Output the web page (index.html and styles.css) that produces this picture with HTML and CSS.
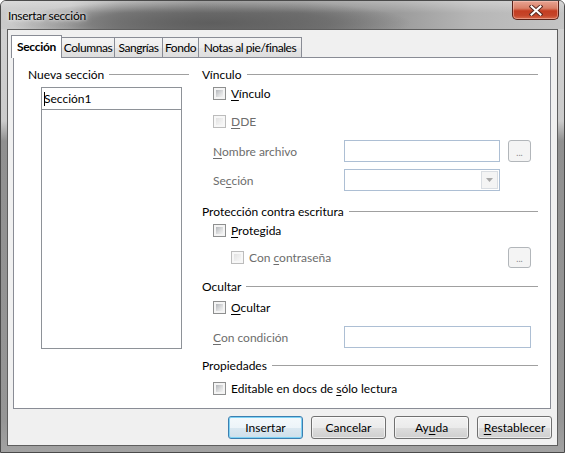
FILE: index.html
```html
<!DOCTYPE html>
<html lang="es">
<head>
<meta charset="utf-8">
<title>Insertar sección</title>
<link rel="stylesheet" href="styles.css">
</head>
<body>
<div class="window">
  <div class="titlebar">
    <span class="title">Insertar sección</span>
    <div class="close">
      <svg width="14" height="11" viewBox="0 0 14 11">
        <path d="M2.5 1.5 L11.5 9.5 M11.5 1.5 L2.5 9.5" stroke="#5a2a22" stroke-width="4" stroke-linecap="square"/>
        <path d="M2.5 1.5 L11.5 9.5 M11.5 1.5 L2.5 9.5" stroke="#ffffff" stroke-width="2" stroke-linecap="square"/>
      </svg>
    </div>
  </div>
  <div class="client">
    <div class="tabs">
      <div class="tab active t-sec">Sección</div>
      <div class="tab t-col">Columnas</div>
      <div class="tab t-san">Sangrías</div>
      <div class="tab t-fon">Fondo</div>
      <div class="tab t-not">Notas al pie/finales</div>
    </div>
    <div class="panel">
      <div class="col-left">
        <div class="group-head"><span>Nueva sección</span><i class="rule"></i></div>
        <div class="name-input"><span class="caret"></span>Sección1</div>
        <div class="name-list"></div>
      </div>
      <div class="col-right">
        <div class="group-head"><span>Vínculo</span><i class="rule"></i></div>
        <label class="check-row ind1 m3"><span class="cb"></span><span><u>V</u>ínculo</span></label>
        <label class="check-row ind1 m12 disabled"><span class="cb"></span><span><u>D</u>DE</span></label>
        <div class="field-row m11 disabled"><span class="flabel"><u>N</u>ombre archivo</span><span class="input w-short"></span><span class="dots">...</span></div>
        <div class="field-row m7 disabled"><span class="flabel">Se<u>c</u>ción</span><span class="input w-short combo"><span class="arrow"><svg width="7" height="4" viewBox="0 0 7 4"><path d="M0 0 H7 L3.5 4 Z" fill="#a8a8a8"/></svg></span></span></div>

        <div class="group-head m12"><span>Protección contra escritura</span><i class="rule"></i></div>
        <label class="check-row ind1 m3"><span class="cb"></span><span><u>P</u>rotegida</span></label>
        <div class="check-row ind2 m9 tall disabled"><span class="cb"></span><span class="grow">Con <u>c</u>ontraseña</span><span class="dots">...</span></div>

        <div class="group-head m10"><span>Ocultar</span><i class="rule"></i></div>
        <label class="check-row ind1 m5"><span class="cb"></span><span><u>O</u>cultar</span></label>
        <div class="field-row m11 disabled"><span class="flabel"><u>C</u>on condición</span><span class="input w-long"></span></div>

        <div class="group-head m9"><span>Propiedades</span><i class="rule"></i></div>
        <label class="check-row ind1 m7"><span class="cb"></span><span>Editable en docs de <u>s</u>ólo lectura</span></label>
      </div>
    </div>
    <div class="buttons">
      <div class="btn default">Insertar</div>
      <div class="btn">Cancelar</div>
      <div class="btn">Ay<u>u</u>da</div>
      <div class="btn"><u>R</u>establecer</div>
    </div>
  </div>
</div>
</body>
</html>
```

FILE: styles.css
```css
* { box-sizing: border-box; }

html, body {
  margin: 0;
  padding: 0;
  background: #ffffff;
}

body {
  font-family: "Lato", "Noto Sans", sans-serif;
  font-size: 12px;
  color: #000;
}

u { text-decoration: underline; text-underline-offset: 2px; }

.window {
  width: 565px;
  height: 453px;
  border: 1px solid #4a4a4a;
  border-radius: 6px 6px 0 0;
  padding: 0 6px 6px;
  display: flex;
  flex-direction: column;
  background: linear-gradient(to bottom, #d2d2d2 0, #cbcbcb 120px, #909090 140px, #969696 420px, #a2a2a2 100%);
  overflow: hidden;
}

/* ---------- title bar ---------- */
.titlebar {
  height: 28px;
  margin: 0 -6px;
  padding-left: 7px;
  display: flex;
  align-items: flex-start;
  justify-content: space-between;
  background:
    linear-gradient(to bottom, rgba(255,255,255,0.3) 0, rgba(255,255,255,0) 12px),
    radial-gradient(ellipse 200px 24px at 210px 22px, #5e5e5e 0%, rgba(98,98,98,0.65) 60%, rgba(120,120,120,0) 100%),
    linear-gradient(to right, #cacaca 0, #c4c4c4 70px, #9c9c9c 120px, #7e7e7e 200px, #828282 300px, #9c9c9c 400px, #b6b6b6 470px, #c4c4c4 100%);
}

.title {
  margin-top: 7px;
  font-size: 12px;
  line-height: 15px;
  letter-spacing: -0.3px;
  color: #000;
  text-shadow: 0 0 6px #f2f2f2, 0 0 3px #f2f2f2;
}

.close {
  width: 47px;
  height: 19px;
  margin-right: 5px;
  border: 1px solid #5b2219;
  border-top: none;
  border-radius: 0 0 5px 5px;
  display: flex;
  align-items: center;
  justify-content: center;
  background: linear-gradient(to bottom, #e8a493 0, #d98068 40%, #c43d22 55%, #c5452a 80%, #d76b4d 100%);
  box-shadow: inset 0 0 0 1px rgba(255,210,200,0.45);
}

/* ---------- client area ---------- */
.client {
  flex: 1;
  border: 1px solid #5e5e5e;
  background: #f0f0f0;
  padding: 5px 6px 6px 5px;
  display: flex;
  flex-direction: column;
}

.tabs {
  height: 22px;
  display: flex;
  align-items: flex-end;
  position: relative;
  z-index: 1;
}

.tab {
  height: 20px;
  margin-left: -1px;
  border: 1px solid #898c95;
  border-bottom: none;
  background: linear-gradient(to bottom, #f4f4f4 0, #ededed 50%, #e5e5e5 51%, #dedede 100%);
  display: flex;
  align-items: center;
  justify-content: center;
  white-space: nowrap;
  letter-spacing: -0.45px;
  line-height: 1;
  overflow: hidden;
}

.tab.active {
  height: 23px;
  margin-left: -2px;
  margin-bottom: -1px;
  background: #ffffff;
  font-weight: bold;
  letter-spacing: -0.3px;
  position: relative;
  z-index: 2;
}

.t-sec { width: 51px; }
.t-col { width: 54px; margin-left: -1px; }
.t-san { width: 49px; }
.t-fon { width: 37px; }
.t-not { width: 104px; }

.panel {
  height: 352px;
  border: 1px solid #898c95;
  background: #ffffff;
  padding-top: 8px;
  display: flex;
  align-items: flex-start;
}

.col-left {
  width: 175px;
  padding-left: 14px;
}

.col-right {
  width: 336px;
  margin-left: 13px;
  display: flex;
  flex-direction: column;
}

.group-head {
  height: 16px;
  display: flex;
  align-items: center;
  white-space: nowrap;
}

.rule {
  flex: 1;
  height: 1px;
  margin-left: 5px;
  background: #a0a0a0;
}

.name-input {
  margin: 5px 0 0 13px;
  width: 141px;
  height: 22px;
  border: 1px solid #8e9298;
  border-bottom: none;
  padding: 2px 0 0 2px;
  line-height: 18px;
}

.caret {
  display: inline-block;
  width: 1px;
  height: 14px;
  margin-right: -1px;
  background: #000;
  vertical-align: -3px;
}

.name-list {
  margin-left: 13px;
  width: 141px;
  height: 240px;
  border: 1px solid #8e9298;
}

/* rows */
.m3 { margin-top: 3px; }
.m5 { margin-top: 5px; }
.m7 { margin-top: 7px; }
.m9 { margin-top: 9px; }
.m10 { margin-top: 10px; }
.m11 { margin-top: 11px; }
.m12 { margin-top: 12px; }

.check-row {
  height: 16px;
  display: flex;
  align-items: center;
  white-space: nowrap;
}

.check-row.tall { height: 21px; }

.ind1 { padding-left: 11px; }
.ind2 { padding-left: 29px; }

.cb {
  width: 13px;
  height: 13px;
  flex: none;
  margin-right: 5px;
  border: 1px solid #8e8f8f;
  padding: 2px;
  background: linear-gradient(135deg, #b4b7bb 0, #dedfe0 60%, #f3f3f3 100%) content-box, #f4f4f4;
}

.disabled { color: #6d6d6d; }

.disabled .cb {
  border-color: #bcbcbc;
  background: linear-gradient(135deg, #e2e2e2 0, #efefef 60%, #f7f7f7 100%) content-box, #f7f7f7;
}

.grow { flex: 1; }

.field-row {
  height: 22px;
  display: flex;
  align-items: center;
  padding-left: 11px;
}

.flabel { width: 131px; white-space: nowrap; }

.input {
  height: 22px;
  border: 1px solid #adbfd4;
  background: #ffffff;
  display: flex;
  justify-content: flex-end;
}

.w-short { width: 156px; }
.w-long { width: 187px; }

.combo { padding: 1px; }

.arrow {
  width: 17px;
  border: 1px solid #d9dde2;
  background: #f4f4f4;
  display: flex;
  align-items: center;
  justify-content: center;
}

.dots {
  width: 23px;
  height: 21px;
  margin-left: 7px;
  margin-right: 7px;
  border: 1px solid #b2b6ba;
  border-radius: 3px;
  background: #f4f4f4;
  color: #8a8a8a;
  font-size: 9px;
  display: flex;
  align-items: center;
  justify-content: center;
  padding-top: 2px;
  flex: none;
}

.field-row .dots { height: 22px; margin-left: 8px; }

/* buttons */
.buttons {
  margin-top: 7px;
  margin-right: -1px;
  display: flex;
  justify-content: flex-end;
  gap: 8px;
}

.btn {
  width: 75px;
  height: 23px;
  border: 1px solid #707070;
  border-radius: 3px;
  background: linear-gradient(to bottom, #f2f2f2 0, #ebebeb 50%, #dddddd 51%, #cfcfcf 100%);
  box-shadow: inset 0 0 0 1px rgba(255,255,255,0.6);
  display: flex;
  align-items: center;
  justify-content: center;
  white-space: nowrap;
}

.btn.default {
  border-color: #3c7fb1;
  background: linear-gradient(to bottom, #f4f9fc 0, #edf4f9 50%, #dbe8f1 51%, #cfdfea 100%);
  box-shadow: inset 0 0 0 1px #7fd2f4;
}
```
